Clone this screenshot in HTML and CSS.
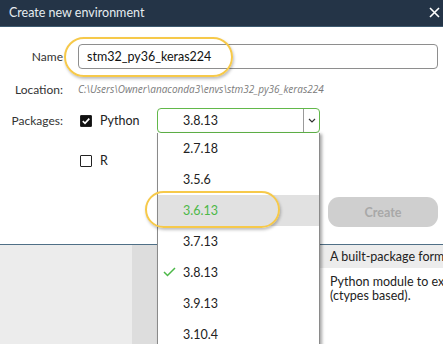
FILE: index.html
```html
<!DOCTYPE html>
<html lang="en">
<head>
    <meta charset="UTF-8">
    <title>Create new environment</title>
    <link rel="stylesheet" href="styles.css">
</head>
<body>
    <div class="dialog">
        <header class="titlebar">
            <span class="title">Create new environment</span>
            <svg class="close" width="11" height="11" viewBox="0 0 11 11">
                <path d="M1 1 L10 10 M10 1 L1 10" stroke="#ffffff" stroke-width="1.6" fill="none"/>
            </svg>
        </header>

        <div class="form">
            <div class="row row-name">
                <label class="lbl">Name</label>
                <div class="field">stm32_py36_keras224</div>
            </div>

            <div class="row row-location">
                <label class="lbl">Location:</label>
                <div class="path">C:\Users\Owner\anaconda3\envs\stm32_py36_keras224</div>
            </div>

            <div class="row row-packages">
                <label class="lbl lbl-wide">Packages:</label>
                <div class="check">
                    <span class="box checked">
                        <svg width="10" height="10" viewBox="0 0 10 10">
                            <path d="M1.8 5.2 L4 7.3 L8.3 2.6" stroke="#ffffff" stroke-width="1.7" fill="none"/>
                        </svg>
                    </span>
                    <span class="check-text">Python</span>
                </div>
                <div class="select">
                    <span class="select-value">3.8.13</span>
                    <span class="select-arrow">
                        <svg width="8" height="5" viewBox="0 0 8 5">
                            <path d="M1 1 L4 4 L7 1" stroke="#333" stroke-width="1.2" fill="none"/>
                        </svg>
                    </span>
                    <ul class="options">
                        <li>2.7.18</li>
                        <li>3.5.6</li>
                        <li class="hover">3.6.13</li>
                        <li>3.7.13</li>
                        <li class="selected">
                            <svg class="tick" width="13" height="10" viewBox="0 0 13 10">
                                <path d="M1 5 L4.5 8.5 L12 1" stroke="#4cb848" stroke-width="1.5" fill="none"/>
                            </svg>
                            3.8.13
                        </li>
                        <li>3.9.13</li>
                        <li>3.10.4</li>
                    </ul>
                </div>
            </div>

            <div class="row row-r">
                <div class="check">
                    <span class="box"></span>
                    <span class="check-text">R</span>
                </div>
            </div>

            <div class="actions">
                <button class="btn-create" disabled>Create</button>
            </div>

            <span class="mark mark-name"></span>
            <span class="mark mark-version"></span>
        </div>

        <div class="lower">
            <div class="side"></div>
            <div class="side-edge"></div>
            <div class="gap"></div>
            <div class="pkg-info">
                <div class="pkg-head">A built-package format for Python</div>
                <div class="pkg-desc">Python module to extract data from PE files (ctypes based).</div>
            </div>
        </div>
    </div>
</body>
</html>
```

FILE: styles.css
```css
body {
    margin: 0;
    font-family: Lato, "Open Sans", sans-serif;
    font-size: 12px;
    color: #222;
    background: #ffffff;
    overflow: hidden;
}
.dialog {
    width: 443px;
    height: 344px;
    overflow: hidden;
}
.titlebar {
    height: 26px;
    background: #243447;
    border-bottom: 1px solid #3e5a70;
    display: flex;
    align-items: center;
    justify-content: space-between;
    padding: 0 3px 0 9px;
}
.title {
    color: #e6ecf0;
    font-size: 12.5px;
    margin-top: -1px;
}
.close {
    margin-top: -2px;
}
.form {
    position: relative;
    padding: 17px 5px 0 0;
    height: 200px;
}
.row {
    display: flex;
    align-items: center;
}
.lbl {
    width: 63px;
    text-align: right;
    color: #333;
    flex-shrink: 0;
}
.lbl-wide {
    margin-right: -3px;
    padding-right: 3px;
}
.row-name {
    height: 25px;
}
.field {
    flex: 1;
    margin-left: 15px;
    height: 23px;
    border: 1px solid #8e8e8e;
    border-radius: 4px;
    padding-left: 8px;
    display: flex;
    align-items: center;
    font-size: 12.5px;
    color: #111;
}
.row-location {
    margin-top: 13px;
    height: 14px;
}
.path {
    margin-left: 15px;
    font-family: "Open Sans", sans-serif;
    font-style: italic;
    font-size: 10px;
    color: #7b7b7b;
    white-space: nowrap;
}
.row-packages {
    margin-top: 12px;
    height: 25px;
}
.check {
    display: flex;
    align-items: center;
    margin-left: 17px;
    width: 77px;
}
.box {
    width: 10px;
    height: 10px;
    border: 1px solid #222;
    border-radius: 1px;
    display: flex;
    align-items: center;
    justify-content: center;
}
.box.checked {
    background: #111;
}
.check-text {
    margin-left: 8px;
    font-size: 12.5px;
    color: #222;
}
.row-r {
    margin-top: 15px;
    height: 25px;
}
.row-r .check {
    margin-left: 80px;
}
.select {
    position: relative;
    width: 161px;
    height: 23px;
    border: 1px solid #62b84a;
    border-radius: 4px;
    display: flex;
    align-items: center;
    z-index: 2;
}
.select-value {
    flex: 1;
    padding-left: 25px;
    font-size: 12.5px;
}
.select-arrow {
    width: 15px;
    height: 23px;
    border-left: 1px solid #9a9a9a;
    display: flex;
    align-items: center;
    justify-content: center;
}
.options {
    position: absolute;
    top: 24px;
    left: -1px;
    width: 161px;
    margin: 0;
    padding: 0;
    list-style: none;
    background: #ffffff;
    border: 1px solid #8a8a8a;
    border-top: 0;
    box-shadow: 2px 1px 3px rgba(0, 0, 0, 0.35);
}
.options li {
    height: 31px;
    display: flex;
    align-items: center;
    padding-left: 25px;
    font-size: 12.5px;
    color: #222;
    position: relative;
}
.options li.hover {
    background: #e1e1e1;
    color: #4cb848;
}
.tick {
    position: absolute;
    left: 5px;
    top: 10px;
}
.actions {
    margin-top: 24px;
    display: flex;
    justify-content: flex-end;
}
.btn-create {
    width: 110px;
    height: 30px;
    border: 0;
    border-radius: 11px;
    background: #cfcfcf;
    color: #a8a8a8;
    font-family: inherit;
    font-size: 12.5px;
    font-weight: bold;
}
.mark {
    position: absolute;
    border: 2px solid #f6c94a;
    border-radius: 20px;
    box-shadow: 1px 2px 3px rgba(0, 0, 0, 0.25);
    pointer-events: none;
    z-index: 3;
}
.mark-name {
    left: 64px;
    top: 10px;
    width: 165px;
    height: 36px;
}
.mark-version {
    left: 145px;
    top: 164px;
    width: 131px;
    height: 33px;
}
.lower {
    border-top: 1px solid #4f6f86;
    height: 99px;
    display: grid;
    grid-template-columns: 132px 25px 163px 1fr;
}
.side {
    background: #ececec;
}
.side-edge {
    background: #dddddd;
}
.pkg-info {
    overflow: hidden;
    white-space: nowrap;
}
.pkg-head {
    height: 23px;
    background: #ececec;
    padding-left: 10px;
    display: flex;
    align-items: center;
    font-size: 12.5px;
}
.pkg-desc {
    padding: 7px 0 0 10px;
    width: 250px;
    white-space: normal;
    font-size: 12.5px;
    line-height: 14px;
}
```
